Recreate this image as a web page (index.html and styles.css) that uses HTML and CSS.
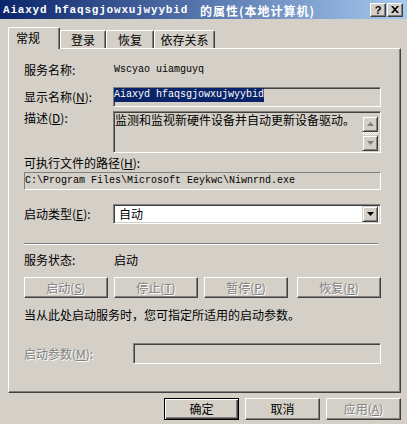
FILE: index.html
```html
<!DOCTYPE html>
<html lang="zh-CN">
<head>
<meta charset="utf-8">
<title>属性</title>
<link rel="stylesheet" href="styles.css">
</head>
<body>
<div class="window">
  <div class="titlebar">
    <div class="title"><span class="t-latin">Aiaxyd hfaqsgjowxujwyybid</span><span class="t-cjk">的属性(本地计算机)</span></div>
    <div class="capbtns">
      <div class="capbtn help">?</div>
      <div class="capbtn close"><svg width="8" height="7" viewBox="0 0 8 7"><path d="M0 0h2l2 2.2L6 0h2L5 3.5 8 7H6L4 4.8 2 7H0l3-3.5z" fill="#000"/></svg></div>
    </div>
  </div>

  <div class="tabs">
    <div class="tab active">常规</div>
    <div class="tab t2">登录</div>
    <div class="tab t3">恢复</div>
    <div class="tab t4">依存关系</div>
  </div>

  <div class="panel">
    <div class="row r-name">
      <div class="lbl">服务名称:</div>
      <div class="val mono">Wscyao uiamguyq</div>
    </div>

    <div class="row r-disp">
      <div class="lbl">显示名称(<u>N</u>):</div>
      <div class="field edit gray"><span class="sel mono">Aiaxyd hfaqsgjowxujwyybid</span></div>
    </div>

    <div class="row r-desc">
      <div class="lbl">描述(<u>D</u>):</div>
      <div class="field memo gray">
        <div class="memo-text">监测和监视新硬件设备并自动更新设备驱动。</div>
        <div class="vscroll">
          <div class="sbtn"><svg width="7" height="4" viewBox="0 0 7 4"><path d="M3.5 0L7 4H0z" fill="#808080"/></svg></div>
          <div class="track"></div>
          <div class="sbtn"><svg width="7" height="4" viewBox="0 0 7 4"><path d="M0 0h7L3.5 4z" fill="#808080"/></svg></div>
        </div>
      </div>
    </div>

    <div class="row r-pathlbl"><div class="lbl wide">可执行文件的路径(<u>H</u>):</div></div>
    <div class="path mono">C:\Program Files\Microsoft Eeykwc\Niwnrnd.exe</div>

    <div class="row r-type">
      <div class="lbl">启动类型(<u>E</u>):</div>
      <div class="field combo">
        <span class="combo-text">自动</span>
        <div class="dropbtn"><svg width="7" height="4" viewBox="0 0 7 4"><path d="M0 0h7L3.5 4z" fill="#000"/></svg></div>
      </div>
    </div>

    <div class="sep"></div>

    <div class="row r-status">
      <div class="lbl">服务状态:</div>
      <div class="val">启动</div>
    </div>

    <div class="row r-btns">
      <div class="btn disabled b1">启动(<u>S</u>)</div>
      <div class="btn disabled b2">停止(<u>T</u>)</div>
      <div class="btn disabled b3">暂停(<u>P</u>)</div>
      <div class="btn disabled b4">恢复(<u>R</u>)</div>
    </div>

    <div class="row r-note">当从此处启动服务时，您可指定所适用的启动参数。</div>

    <div class="row r-param">
      <div class="lbl lbl-param disabled">启动参数(<u>M</u>):</div>
      <div class="field edit gray param"></div>
    </div>
  </div>

  <div class="footer">
    <div class="btn fbtn default">确定</div>
    <div class="btn fbtn">取消</div>
    <div class="btn fbtn disabled">应用(<u>A</u>)</div>
  </div>
</div>
</body>
</html>
```

FILE: styles.css
```css
* { box-sizing: border-box; }
html, body { margin: 0; padding: 0; }
body {
  width: 407px;
  height: 424px;
  overflow: hidden;
  background: #d4d0c8;
  font-family: "Noto Sans CJK SC", "Liberation Sans", sans-serif;
  font-size: 12px;
  color: #000;
}
.window { width: 407px; height: 424px; }

/* title bar */
.titlebar {
  height: 19px;
  display: flex;
  align-items: center;
  justify-content: space-between;
  background: linear-gradient(to right, #0a246a, #a6caf0);
  padding: 0 4px 0 3px;
  color: #fff;
}
.title {
  display: flex;
  align-items: center;
  white-space: nowrap;
  font-weight: bold;
  line-height: 17px;
  padding-top: 2px;
}
.t-latin {
  font-family: "Liberation Mono", monospace;
  font-size: 11px;
  letter-spacing: 0.8px;
}
.t-cjk { font-size: 12px; letter-spacing: 1px; margin-left: 12px; }
.capbtns { display: flex; gap: 1px; }
.capbtn {
  width: 16px;
  height: 14px;
  background: #d4d0c8;
  border-top: 1px solid #fff;
  border-left: 1px solid #fff;
  border-right: 1px solid #404040;
  border-bottom: 1px solid #404040;
  box-shadow: inset -1px -1px #808080;
  display: flex;
  align-items: center;
  justify-content: center;
  color: #000;
}
.help {
  font-family: "Liberation Sans", sans-serif;
  font-weight: bold;
  font-size: 11px;
  line-height: 12px;
}

/* tabs */
.tabs {
  display: flex;
  align-items: flex-end;
  height: 21px;
  margin-top: 8px;
  padding-left: 8px;
  position: relative;
  z-index: 1;
}
.tab {
  height: 18px;
  border-top: 1px solid #fff;
  border-left: 1px solid #fff;
  border-right: 1px solid #404040;
  box-shadow: inset -1px 0 #808080;
  border-radius: 2px 2px 0 0;
  display: flex;
  align-items: center;
  justify-content: center;
  line-height: 14px;
  background: #d4d0c8;
}
.tab.active {
  height: 22px;
  margin-bottom: -1px;
  width: 52px;
  justify-content: flex-start;
  padding-left: 7px;
  padding-bottom: 1px;
}
.t2 { width: 46px; }
.t3 { width: 48px; }
.t4 { width: 61px; }

/* panel */
.panel {
  margin-left: 8px;
  width: 393px;
  height: 345px;
  border-top: 1px solid #fff;
  border-left: 1px solid #fff;
  border-right: 1px solid #404040;
  border-bottom: 1px solid #404040;
  box-shadow: inset -1px -1px #808080;
  padding: 13px 0 0 15px;
}
.row { display: flex; align-items: center; }
.lbl { width: 89px; flex: none; line-height: 16px; white-space: nowrap; }
.lbl.wide { width: auto; }
.lbl u, .btn u { text-decoration: underline; text-underline-offset: 1px; }
.val { line-height: 16px; padding-left: 1px; }
.mono { font-family: "Liberation Mono", monospace; font-size: 10px; }
.disabled { color: #808080; text-shadow: 1px 1px 0 #fff; }

.field {
  border-top: 1px solid #808080;
  border-left: 1px solid #808080;
  border-right: 1px solid #fff;
  border-bottom: 1px solid #fff;
  box-shadow: inset 1px 1px #404040, inset -1px -1px #d4d0c8;
  width: 268px;
}
.gray { background: #d4d0c8; }

.r-name { height: 16px; }
.r-disp { height: 20px; margin-top: 9px; }
.edit { height: 20px; display: flex; align-items: flex-start; padding-top: 0; }
.sel {
  background: #0a246a;
  color: #fff;
  line-height: 14px;
  height: 14px;
}

.r-desc { height: 42px; margin-top: 4px; align-items: flex-start; }
.r-desc .lbl { line-height: 14px; }
.memo { height: 42px; display: flex; padding: 1px; }
.memo-text { flex: 1; min-width: 0; line-height: 14px; white-space: nowrap; }
.vscroll { width: 16px; flex: none; display: flex; flex-direction: column; padding-top: 3px; margin-right: 1px; }
.sbtn {
  width: 16px;
  height: 16px;
  background: #d4d0c8;
  border-top: 1px solid #d4d0c8;
  border-left: 1px solid #d4d0c8;
  border-right: 1px solid #404040;
  border-bottom: 1px solid #404040;
  box-shadow: inset 1px 1px #fff, inset -1px -1px #808080;
  display: flex;
  align-items: center;
  justify-content: center;
}
.track {
  flex: 1;
  background-image: repeating-conic-gradient(#fff 0 25%, #d4d0c8 0 50%);
  background-size: 2px 2px;
}

.r-pathlbl { height: 16px; margin-top: 2px; }
.path {
  margin-top: 1px;
  width: 357px;
  height: 18px;
  border-top: 1px solid #808080;
  border-left: 1px solid #808080;
  border-right: 1px solid #fff;
  border-bottom: 1px solid #fff;
  line-height: 16px;
  white-space: nowrap;
}

.r-type { height: 20px; margin-top: 14px; }
.combo {
  height: 20px;
  background: #fff;
  display: flex;
  align-items: center;
  padding: 1px;
}
.combo-text { flex: 1; padding-left: 4px; line-height: 16px; }
.dropbtn {
  width: 16px;
  height: 16px;
  margin-right: 1px;
  background: #d4d0c8;
  border-top: 1px solid #d4d0c8;
  border-left: 1px solid #d4d0c8;
  border-right: 1px solid #404040;
  border-bottom: 1px solid #404040;
  box-shadow: inset 1px 1px #fff, inset -1px -1px #808080;
  display: flex;
  align-items: center;
  justify-content: center;
}

.sep {
  margin-top: 19px;
  width: 354px;
  height: 2px;
  border-top: 1px solid #808080;
  border-bottom: 1px solid #fff;
}

.r-status { height: 16px; margin-top: 7px; }

.r-btns { height: 21px; margin-top: 9px; }
.btn {
  height: 21px;
  background: #d4d0c8;
  border-top: 1px solid #fff;
  border-left: 1px solid #fff;
  border-right: 1px solid #404040;
  border-bottom: 1px solid #404040;
  box-shadow: inset -1px -1px #808080;
  display: flex;
  align-items: center;
  justify-content: center;
  line-height: 14px;
  white-space: nowrap;
}
.r-btns .btn { width: 84px; }
.b2, .b3 { margin-left: 6px; }
.b4 { margin-left: 9px; }

.r-note { height: 16px; margin-top: 9px; line-height: 16px; }

.r-param { height: 21px; margin-top: 20px; }
.lbl-param { width: 109px; }
.param { width: 248px; height: 21px; }

/* footer */
.footer {
  display: flex;
  justify-content: flex-end;
  gap: 6px;
  margin-top: 5px;
  padding-right: 6px;
}
.fbtn { width: 75px; height: 22px; }
.fbtn.default {
  border: 1px solid #000;
  box-shadow: inset 1px 1px #fff, inset -1px -1px #404040, inset -2px -2px #808080;
}
```
